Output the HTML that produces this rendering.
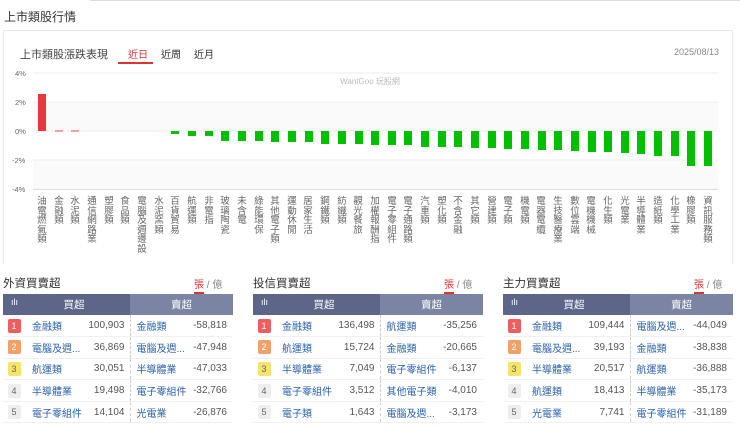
<!DOCTYPE html>
<html><head><meta charset="utf-8"><style>
*{margin:0;padding:0;box-sizing:border-box}
body{width:740px;height:429px;overflow:hidden;background:#fff;font-family:"Liberation Sans","Noto Sans CJK TC",sans-serif;position:relative;color:#333}
.abs{position:absolute}
.lbl{position:absolute;top:197px;width:10px;font-size:9.5px;line-height:9.6px;color:#666;word-break:break-all;text-align:center}
.panel{position:absolute;top:270px;width:230px}
.pt{position:absolute;left:0;top:5px;font-size:11.5px;color:#333}
.unit{position:absolute;left:191px;top:6px;font-size:10px;color:#888}
.unit b{color:#d33;font-weight:normal;border-bottom:2px solid #d33;padding-bottom:1px}
table{position:absolute;top:24px;left:0;width:230px;border-collapse:collapse;font-size:10px}
th{height:21px;color:#fff;font-weight:normal;font-size:10.5px}
th.a{background:#5d6689;width:127px}
th.b{background:#7c84a3}
td{height:21.6px;border-bottom:1px solid #f0f0f0;color:#555}
td.bd{width:22px;text-align:center}
td.bd span{display:inline-block;width:13px;height:14px;line-height:14px;font-size:9px;color:#fff;border-radius:2px}
.r1{background:#ef5e5e}.r2{background:#f2a06a}.r3{background:#f6e36a;color:#666!important}.r4{background:#eee;color:#666!important}
td.n{color:#2b62a8;padding-left:7px;width:60px;white-space:nowrap}
td.v{text-align:right;padding-right:5px;border-right:1px dashed #ccc;width:45px}
td.s{color:#2b62a8;padding-left:6px;white-space:nowrap}
td.w{text-align:right;padding-right:6px}
</style></head><body>
<div class="abs" style="left:90px;top:0;width:650px;height:1px;background:#ddd"></div>
<div class="abs" style="left:4px;top:8px;font-size:12px;color:#333">上市類股行情</div>
<div class="abs" style="left:3px;top:30px;width:730px;height:234px;border:1px solid #e8e8e8;border-bottom:none"></div>
<div class="abs" style="left:20px;top:46px;font-size:11px;color:#444">上市類股漲跌表現</div>
<div class="abs" style="left:128px;top:46px;font-size:10px;color:#d33">近日</div>
<div class="abs" style="left:118px;top:62px;width:35px;height:2px;background:#d33"></div>
<div class="abs" style="left:161px;top:46px;font-size:10px;color:#333">近周</div>
<div class="abs" style="left:194px;top:46px;font-size:10px;color:#333">近月</div>
<div class="abs" style="left:674px;top:47px;font-size:9px;color:#888">2025/08/13</div>
<svg class="abs" style="left:0;top:0" width="740" height="200">
<rect x="33" y="102" width="685" height="29" fill="#fafafa"/>
<rect x="33" y="160" width="685" height="29" fill="#fafafa"/>
<g stroke="#eee"><line x1="33" y1="73" x2="718" y2="73"/><line x1="33" y1="102" x2="718" y2="102"/><line x1="33" y1="131" x2="718" y2="131"/><line x1="33" y1="160" x2="718" y2="160"/></g>
<line x1="33" y1="189.5" x2="718" y2="189.5" stroke="#ddd"/>
<g font-size="7.5" fill="#666" font-family="Liberation Sans"><text x="15" y="76">4%</text><text x="15" y="105">2%</text><text x="15" y="134">0%</text><text x="12" y="163">-2%</text><text x="12" y="192">-4%</text></g>
<text x="370" y="84" font-size="8" fill="#bbb" text-anchor="middle" font-family="Liberation Sans,Noto Sans CJK TC">WantGoo 玩股網</text>
<rect x="38" y="94" width="8" height="37" fill="#e8383d"/>
<rect x="55" y="130" width="8" height="2" fill="#f2a0a0"/>
<rect x="71" y="130" width="8" height="2" fill="#f2a0a0"/>
<g fill="#00c000">
<rect x="171" y="131" width="8" height="3"/>
<rect x="188" y="131" width="8" height="5"/>
<rect x="205" y="131" width="8" height="5"/>
<rect x="221" y="131" width="8" height="10"/>
<rect x="238" y="131" width="8" height="10"/>
<rect x="255" y="131" width="8" height="10"/>
<rect x="271" y="131" width="8" height="11"/>
<rect x="288" y="131" width="8" height="11"/>
<rect x="305" y="131" width="8" height="11"/>
<rect x="321" y="131" width="8" height="13"/>
<rect x="338" y="131" width="8" height="13"/>
<rect x="355" y="131" width="8" height="13"/>
<rect x="371" y="131" width="8" height="14"/>
<rect x="388" y="131" width="8" height="14"/>
<rect x="404" y="131" width="8" height="14"/>
<rect x="421" y="131" width="8" height="16"/>
<rect x="438" y="131" width="8" height="16"/>
<rect x="454" y="131" width="8" height="16"/>
<rect x="471" y="131" width="8" height="17"/>
<rect x="488" y="131" width="8" height="17"/>
<rect x="504" y="131" width="8" height="18"/>
<rect x="521" y="131" width="8" height="18"/>
<rect x="538" y="131" width="8" height="19"/>
<rect x="554" y="131" width="8" height="19"/>
<rect x="571" y="131" width="8" height="20"/>
<rect x="588" y="131" width="8" height="21"/>
<rect x="604" y="131" width="8" height="21"/>
<rect x="621" y="131" width="8" height="22"/>
<rect x="637" y="131" width="8" height="23"/>
<rect x="654" y="131" width="8" height="25"/>
<rect x="671" y="131" width="8" height="25"/>
<rect x="687" y="131" width="8" height="35"/>
<rect x="704" y="131" width="8" height="35"/>
</g>
</svg>
<div class="lbl" style="left:37px">油電燃氣類</div>
<div class="lbl" style="left:54px">金融類</div>
<div class="lbl" style="left:70px">水泥類</div>
<div class="lbl" style="left:87px">通信網路業</div>
<div class="lbl" style="left:104px">塑膠類</div>
<div class="lbl" style="left:120px">食品類</div>
<div class="lbl" style="left:137px">電腦及週邊設</div>
<div class="lbl" style="left:154px">水泥窯類</div>
<div class="lbl" style="left:170px">百貨貿易</div>
<div class="lbl" style="left:187px">航運類</div>
<div class="lbl" style="left:204px">非電指</div>
<div class="lbl" style="left:220px">玻璃陶瓷</div>
<div class="lbl" style="left:237px">未含電</div>
<div class="lbl" style="left:254px">綠能環保</div>
<div class="lbl" style="left:270px">其他電子類</div>
<div class="lbl" style="left:287px">運動休閒</div>
<div class="lbl" style="left:303px">居家生活</div>
<div class="lbl" style="left:320px">鋼鐵類</div>
<div class="lbl" style="left:337px">紡織類</div>
<div class="lbl" style="left:353px">觀光餐旅</div>
<div class="lbl" style="left:370px">加權報酬指</div>
<div class="lbl" style="left:387px">電子零組件</div>
<div class="lbl" style="left:403px">電子通路類</div>
<div class="lbl" style="left:420px">汽車類</div>
<div class="lbl" style="left:437px">塑化類</div>
<div class="lbl" style="left:453px">不含金融</div>
<div class="lbl" style="left:470px">其它類</div>
<div class="lbl" style="left:487px">營建類</div>
<div class="lbl" style="left:503px">電子類</div>
<div class="lbl" style="left:520px">機電類</div>
<div class="lbl" style="left:536px">電器電纜</div>
<div class="lbl" style="left:553px">生技醫療業</div>
<div class="lbl" style="left:570px">數位雲端</div>
<div class="lbl" style="left:586px">電機機械</div>
<div class="lbl" style="left:603px">化生類</div>
<div class="lbl" style="left:620px">光電業</div>
<div class="lbl" style="left:636px">半導體業</div>
<div class="lbl" style="left:653px">造紙類</div>
<div class="lbl" style="left:670px">化學工業</div>
<div class="lbl" style="left:686px">橡膠類</div>
<div class="lbl" style="left:703px">資訊服務類</div>

<div class="panel" style="left:3px">
<div class="pt">外資買賣超</div><div class="unit"><b>張</b> / 億</div>
<table><tr><th class="a" colspan="3"><span style="float:left;padding-left:8px;font-size:9px">ılı</span>買超</th><th class="b" colspan="2">賣超</th></tr>
<tr><td class="bd"><span class="r1">1</span></td><td class="n">金融類</td><td class="v">100,903</td><td class="s">金融類</td><td class="w">-58,818</td></tr>
<tr><td class="bd"><span class="r2">2</span></td><td class="n">電腦及週...</td><td class="v">36,869</td><td class="s">電腦及週...</td><td class="w">-47,948</td></tr>
<tr><td class="bd"><span class="r3">3</span></td><td class="n">航運類</td><td class="v">30,051</td><td class="s">半導體業</td><td class="w">-47,033</td></tr>
<tr><td class="bd"><span class="r4">4</span></td><td class="n">半導體業</td><td class="v">19,498</td><td class="s">電子零組件</td><td class="w">-32,766</td></tr>
<tr><td class="bd"><span class="r4">5</span></td><td class="n">電子零組件</td><td class="v">14,104</td><td class="s">光電業</td><td class="w">-26,876</td></tr></table>
</div>
<div class="panel" style="left:253px">
<div class="pt">投信買賣超</div><div class="unit"><b>張</b> / 億</div>
<table><tr><th class="a" colspan="3"><span style="float:left;padding-left:8px;font-size:9px">ılı</span>買超</th><th class="b" colspan="2">賣超</th></tr>
<tr><td class="bd"><span class="r1">1</span></td><td class="n">金融類</td><td class="v">136,498</td><td class="s">航運類</td><td class="w">-35,256</td></tr>
<tr><td class="bd"><span class="r2">2</span></td><td class="n">航運類</td><td class="v">15,724</td><td class="s">金融類</td><td class="w">-20,665</td></tr>
<tr><td class="bd"><span class="r3">3</span></td><td class="n">半導體業</td><td class="v">7,049</td><td class="s">電子零組件</td><td class="w">-6,137</td></tr>
<tr><td class="bd"><span class="r4">4</span></td><td class="n">電子零組件</td><td class="v">3,512</td><td class="s">其他電子類</td><td class="w">-4,010</td></tr>
<tr><td class="bd"><span class="r4">5</span></td><td class="n">電子類</td><td class="v">1,643</td><td class="s">電腦及週...</td><td class="w">-3,173</td></tr></table>
</div>
<div class="panel" style="left:503px">
<div class="pt">主力買賣超</div><div class="unit"><b>張</b> / 億</div>
<table><tr><th class="a" colspan="3"><span style="float:left;padding-left:8px;font-size:9px">ılı</span>買超</th><th class="b" colspan="2">賣超</th></tr>
<tr><td class="bd"><span class="r1">1</span></td><td class="n">金融類</td><td class="v">109,444</td><td class="s">電腦及週...</td><td class="w">-44,049</td></tr>
<tr><td class="bd"><span class="r2">2</span></td><td class="n">電腦及週...</td><td class="v">39,193</td><td class="s">金融類</td><td class="w">-38,838</td></tr>
<tr><td class="bd"><span class="r3">3</span></td><td class="n">半導體業</td><td class="v">20,517</td><td class="s">航運類</td><td class="w">-36,888</td></tr>
<tr><td class="bd"><span class="r4">4</span></td><td class="n">航運類</td><td class="v">18,413</td><td class="s">半導體業</td><td class="w">-35,173</td></tr>
<tr><td class="bd"><span class="r4">5</span></td><td class="n">光電業</td><td class="v">7,741</td><td class="s">電子零組件</td><td class="w">-31,189</td></tr></table>
</div>
</body></html>
